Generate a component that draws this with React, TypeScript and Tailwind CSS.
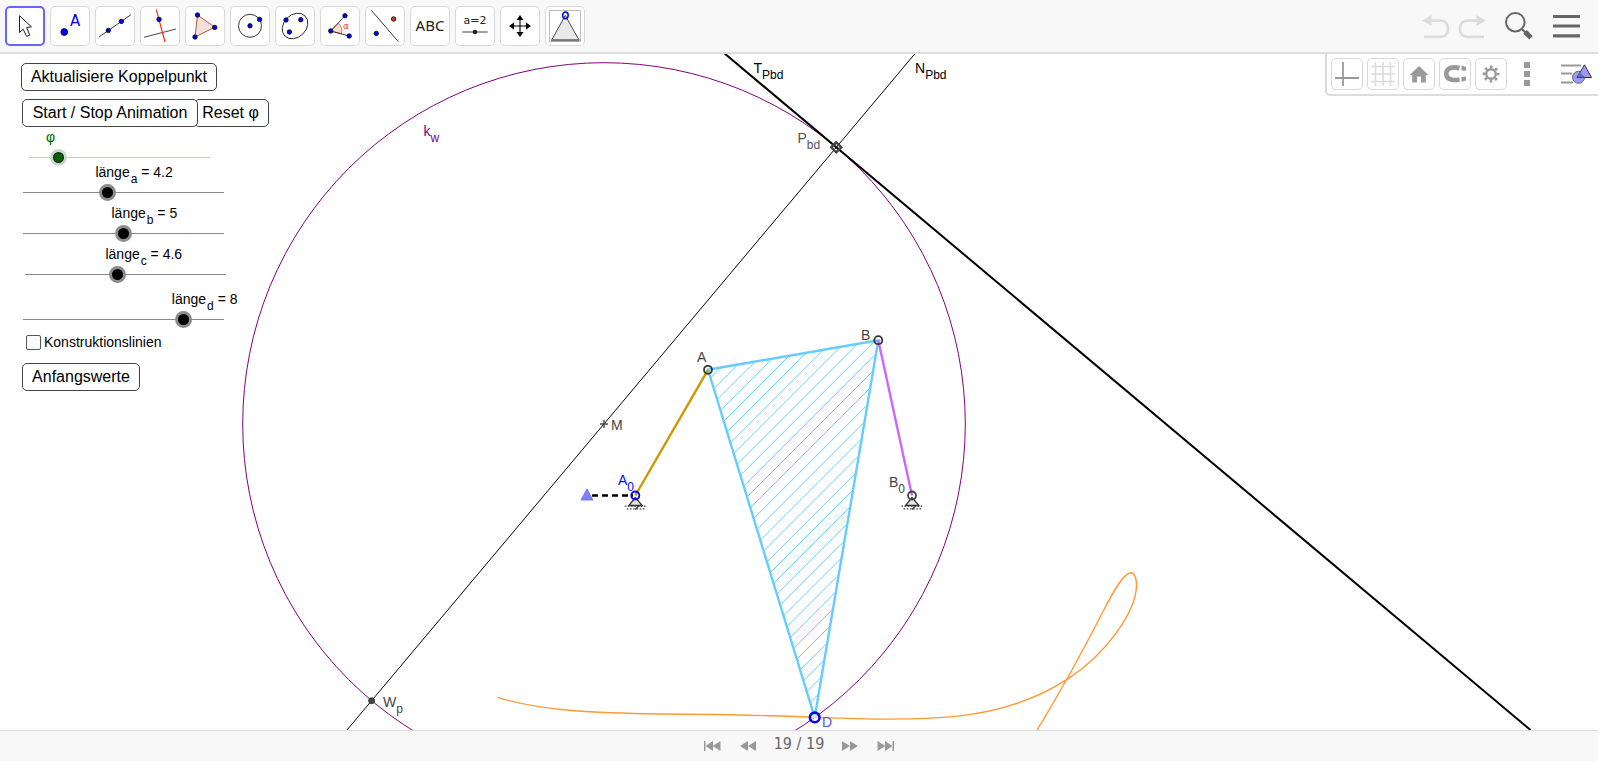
import { useState, type CSSProperties, type ReactNode } from "react";

const BLUE = "#0000ff";

const COUPLER_CURVE =
  "M497.5 697.4C545 712 600 713 661 714C720 714.3 770 715.5 814.6 717.3C860 719 910 721 960 715.9C1003 711 1040 697 1067.5 679.2C1105 655 1136.5 612 1136.5 585C1136.5 577 1134 572.7 1131 572.7C1124 572.7 1114 590 1103.3 611C1090 637 1070 676 1036 732";

/* ---------- toolbar ---------- */

function Dot({ x, y, fill = BLUE, r = 2.2 }: { x: number; y: number; fill?: string; r?: number }) {
  return <circle cx={x} cy={y} r={r} fill={fill} stroke="#000" strokeWidth="0.8" />;
}

const TOOLS: { name: string; icon: ReactNode }[] = [
  {
    name: "Bewege",
    icon: <path d="M14.5 9.7V26.5L18.2 23.2L21.6 30.4L24.8 29L21.6 21.6L26.4 20.8Z" fill="#fff" stroke="#222" strokeWidth="1" />,
  },
  {
    name: "Punkt",
    icon: (
      <>
        <Dot x={14.3} y={26} r={3.4} />
        <text x="20" y="19.7" fill={BLUE} className="font-['DejaVu_Sans',sans-serif] text-[15px]">A</text>
      </>
    ),
  },
  {
    name: "Gerade",
    icon: (
      <>
        <path d="M4 31L36 8.7" stroke="#222" strokeWidth="0.9" />
        <Dot x={13.3} y={24.4} />
        <Dot x={26.4} y={15.4} />
      </>
    ),
  },
  {
    name: "Senkrechte",
    icon: (
      <>
        <path d="M4 31.3L36 23" stroke="#333" strokeWidth="0.9" />
        <path d="M16.3 3.7L25 36" stroke="#f03020" strokeWidth="1.2" />
        <Dot x={19} y={13.4} />
      </>
    ),
  },
  {
    name: "Vieleck",
    icon: (
      <>
        <path d="M12.5 9L29.7 21.3L10 31Z" fill="#f3e0d6" stroke="#a84a2c" strokeWidth="0.9" />
        <Dot x={12.5} y={9} />
        <Dot x={29.7} y={21.4} />
        <Dot x={10} y={31} />
      </>
    ),
  },
  {
    name: "Kreis",
    icon: (
      <>
        <circle cx="20" cy="19.8" r="11.5" stroke="#222" strokeWidth="0.9" />
        <Dot x={20} y={19.8} />
        <Dot x={29.6} y={13.4} />
      </>
    ),
  },
  {
    name: "Ellipse",
    icon: (
      <>
        <ellipse cx="20" cy="20" rx="14.2" ry="11.2" transform="rotate(-45 20 20)" stroke="#222" strokeWidth="0.9" />
        <Dot x={11} y={14} />
        <Dot x={25.8} y={13.7} />
        <Dot x={14.4} y={26} />
      </>
    ),
  },
  {
    name: "Winkel",
    icon: (
      <>
        <path d="M10.7 25L18.4 17.2A11 11 0 0 1 21.4 27.8Z" fill="#fbdcd4" stroke="#e8502f" strokeWidth="0.8" />
        <path d="M25 9.7L10.7 25L29 30" stroke="#222" strokeWidth="0.9" />
        <Dot x={25} y={9.8} />
        <Dot x={10.7} y={25} />
        <Dot x={29.2} y={30} />
        <text x="23" y="23" fill="#f03020" className="font-['DejaVu_Sans',sans-serif] text-[9px]">α</text>
      </>
    ),
  },
  {
    name: "Spiegelung",
    icon: (
      <>
        <path d="M6.3 4.3L33.4 35.7" stroke="#222" strokeWidth="0.9" />
        <Dot x={28.6} y={13} fill="#f03030" />
        <Dot x={11.3} y={27.4} />
      </>
    ),
  },
  {
    name: "Text",
    icon: (
      <text x="20" y="25.3" textAnchor="middle" fill="#222" className="font-['Noto_Sans',sans-serif] text-[15px]">ABC</text>
    ),
  },
  {
    name: "Schieberegler",
    icon: (
      <>
        <text x="20" y="18.3" textAnchor="middle" fill="#222" className="font-['DejaVu_Sans',sans-serif] text-[11px]">a=2</text>
        <path d="M7.3 26H32.7" stroke="#777" strokeWidth="1.4" />
        <circle cx="20" cy="26" r="2.3" fill="#222" />
      </>
    ),
  },
  {
    name: "Verschiebe Zeichenblatt",
    icon: (
      <>
        <path d="M20 12V28M12 20H28" stroke="#000" strokeWidth="1.1" />
        <path d="M20 9L23.5 14H16.5ZM20 31L23.5 26H16.5ZM9 20L14 16.5V23.5ZM31 20L26 16.5V23.5Z" fill="#000" />
      </>
    ),
  },
  {
    name: "Lager",
    icon: (
      <>
        <path d="M4.5 4.5H35.5V35.5H4.5Z" fill="#fff" stroke="#bbb" />
        <path d="M20.3 9.5L34 34H6.7Z" fill="#e9e9e9" stroke="#333" strokeWidth="0.9" />
        <path d="M6 34.3H34.5" stroke="#777" strokeWidth="2" />
        <ellipse cx="20.4" cy="9.3" rx="2.8" ry="3.4" stroke={BLUE} strokeWidth="1.5" />
      </>
    ),
  },
];

function Toolbar() {
  const [active, setActive] = useState(0);
  return (
    <header className="flex shrink-0 items-center border-b-2 border-[#dddddd] bg-[#f8f8f8] py-[6px] pr-[18px] pl-[5px]">
      <div className="flex gap-[5px]">
        {TOOLS.map((tool, i) => (
          <button
            key={tool.name}
            type="button"
            aria-label={tool.name}
            aria-pressed={i === active}
            onClick={() => setActive(i)}
            className={
              i === active
                ? "size-10 rounded-[5px] bg-white inset-ring-2 inset-ring-[#6666ff]"
                : "size-10 rounded-[5px] bg-white inset-ring inset-ring-[#d8d8d8]"
            }
          >
            <svg width="40" height="40" viewBox="0 0 40 40" fill="none">
              {tool.icon}
            </svg>
          </button>
        ))}
      </div>
      <div className="ml-auto flex items-center">
        <button type="button" aria-label="Rückgängig">
          <svg width="28" height="28" viewBox="0 0 28 28" fill="none">
            <path d="M8 8.6H19C23.5 8.6 26 12 26 16.5S23.5 24.8 19 24.8H2" stroke="#dcdcdc" strokeWidth="2.7" />
            <path d="M0 8.6L9.5 3V14Z" fill="#dcdcdc" />
          </svg>
        </button>
        <button type="button" aria-label="Wiederherstellen" className="ml-2">
          <svg width="28" height="28" viewBox="0 0 28 28" fill="none">
            <path d="M20 8.6H9C4.5 8.6 2 12 2 16.5S4.5 24.8 9 24.8H26" stroke="#dcdcdc" strokeWidth="2.7" />
            <path d="M28 8.6L18.5 3V14Z" fill="#dcdcdc" />
          </svg>
        </button>
        <button type="button" aria-label="Suche" className="ml-[18px]">
          <svg width="30" height="30" viewBox="0 0 30 30" fill="none" stroke="#666">
            <circle cx="11.3" cy="11.2" r="9.3" strokeWidth="2" />
            <path d="M17.8 18L21.5 21.5" strokeWidth="2.2" />
            <path d="M21 20.8L27 26.8" strokeWidth="5" />
          </svg>
        </button>
        <button type="button" aria-label="Menü" className="ml-[19px]">
          <svg width="27" height="28" viewBox="0 0 27 28" fill="none" stroke="#666" strokeWidth="3.2">
            <path d="M0 4.5H27M0 14H27M0 23.8H27" />
          </svg>
        </button>
      </div>
    </header>
  );
}

/* ---------- style bar ---------- */

const STYLE_TOOLS: { name: string; icon: ReactNode }[] = [
  { name: "Achsen", icon: <path d="M4 20H28M12 4V28" stroke="#999" strokeWidth="1.8" /> },
  { name: "Gitter", icon: <path d="M4 8.5H28M4 16H28M4 23.5H28M8.5 4V28M16 4V28M23.5 4V28" stroke="#dcdcdc" strokeWidth="1.6" /> },
  { name: "Standardansicht", icon: <path d="M16 8L25.3 17H22.8V24.5H18V18.5H14V24.5H9.2V17H6.7Z" fill="#999" /> },
  {
    name: "Einfangen",
    icon: (
      <>
        <path d="M20.5 10C11 8 7.2 11.5 7.2 15.7S11 23.4 20.5 21.4" stroke="#999" strokeWidth="4.6" />
        <path d="M22.5 7.6V12.4L27 12.8V9ZM22.5 19V23.8L27 22.4V18.6Z" fill="#999" />
      </>
    ),
  },
  {
    name: "Einstellungen",
    icon: (
      <>
        <circle cx="16" cy="16" r="4.8" stroke="#999" strokeWidth="2.4" />
        <circle cx="16" cy="16" r="7" stroke="#999" strokeWidth="2.8" strokeDasharray="2.6 2.9" strokeDashoffset="1.3" />
      </>
    ),
  },
];

function StyleBar() {
  return (
    <div className="absolute top-0 right-0 flex items-center gap-1 rounded-bl-[5px] border-b-2 border-l-2 border-[#dddddd] bg-white py-[4px] pr-[5px] pl-[4px]">
      {STYLE_TOOLS.map((tool) => (
        <button
          key={tool.name}
          type="button"
          aria-label={tool.name}
          className="size-8 rounded-[5px] bg-white inset-ring inset-ring-[#d8d8d8]"
        >
          <svg width="32" height="32" viewBox="0 0 32 32" fill="none">
            {tool.icon}
          </svg>
        </button>
      ))}
      <button type="button" aria-label="Mehr" className="size-8">
        <svg width="32" height="32" viewBox="0 0 32 32" fill="#999">
          <path d="M13 4H19V10H13ZM13 13H19V19H13ZM13 22H19V28H13Z" />
        </svg>
      </button>
      <button type="button" aria-label="Algebra-Ansicht" className="ml-[14px] size-8">
        <svg width="32" height="32" viewBox="0 0 32 32" fill="none">
          <path d="M0 7.5H20M0 15.5H11M0 24.5H12" stroke="#999" strokeWidth="2" />
          <circle cx="17.5" cy="19.3" r="6" fill="#9999ff" stroke="#666" />
          <path d="M23.5 6.8L30.5 19.5H16Z" fill="#9999ff" stroke="#333" />
          <path d="M16.2 19.2L18.8 14.8L23 18L22.8 19.3Z" fill="#6a6ac8" />
        </svg>
      </button>
    </div>
  );
}

/* ---------- input panel ---------- */

function PanelButton({ children, className = "" }: { children: ReactNode; className?: string }) {
  return (
    <button
      type="button"
      className={`h-7 rounded-[5px] border border-[#444] bg-white text-[16px] leading-6 whitespace-nowrap text-black ${className}`}
    >
      {children}
    </button>
  );
}

type SliderProps = {
  id: string;
  max: number;
  initial: number;
  index?: string;
  green?: boolean;
  className: string;
};

function Slider({ id, max, initial, index, green = false, className }: SliderProps) {
  const [value, setValue] = useState(initial);
  const labelStyle: CSSProperties = { marginLeft: `calc(${(value / max) * 100}% - 12px)` };
  return (
    <div className={className}>
      <label
        htmlFor={id}
        style={labelStyle}
        className={
          green
            ? "block h-[18px] text-[14px] leading-[12px] whitespace-nowrap text-[#006400]"
            : "block h-[18px] text-[14px] leading-[12px] whitespace-nowrap text-black"
        }
      >
        {index ? (
          <>
            länge
            <sub className="bottom-[-6px] ml-px align-baseline text-[12px] leading-none">{index}</sub> = {value}
          </>
        ) : (
          "φ"
        )}
      </label>
      <div className="grid items-center">
        <div className={green ? "col-start-1 row-start-1 h-px bg-[#c4ccc4]" : "col-start-1 row-start-1 h-px bg-[#888]"} />
        <input
          id={id}
          type="range"
          min={0}
          max={max}
          step={max / 100}
          value={value}
          onChange={(e) => setValue(Number(e.target.value))}
          className={
            green
              ? "relative col-start-1 row-start-1 -mx-2 h-[17px] appearance-none bg-transparent [&::-webkit-slider-thumb]:size-[17px] [&::-webkit-slider-thumb]:appearance-none [&::-webkit-slider-thumb]:rounded-full [&::-webkit-slider-thumb]:border-3 [&::-webkit-slider-thumb]:border-[#ccd6cc] [&::-webkit-slider-thumb]:bg-[#006400] [&::-webkit-slider-thumb]:shadow-[inset_0_0_0_1px_#111]"
              : "relative col-start-1 row-start-1 -mx-2 h-[17px] appearance-none bg-transparent [&::-webkit-slider-thumb]:size-[17px] [&::-webkit-slider-thumb]:appearance-none [&::-webkit-slider-thumb]:rounded-full [&::-webkit-slider-thumb]:border-3 [&::-webkit-slider-thumb]:border-[#8c8c8c] [&::-webkit-slider-thumb]:bg-black"
          }
        />
      </div>
    </div>
  );
}

function InputPanel() {
  return (
    <form className="relative flex w-max flex-col items-start pt-[9px] pl-[21px]">
      <PanelButton className="w-[196px]">Aktualisiere Koppelpunkt</PanelButton>
      <div className="mt-2 ml-px flex">
        <PanelButton className="relative z-10 w-[176px]">Start / Stop Animation</PanelButton>
        <PanelButton className="-ml-1 w-[75px] pr-[2px]">Reset φ</PanelButton>
      </div>
      <Slider id="phi" max={100} initial={16} green className="mt-1 ml-2 w-[181px]" />
      <Slider id="laenge-a" index="a" max={10} initial={4.2} className="ml-[2px] w-[201px]" />
      <Slider id="laenge-b" index="b" max={10} initial={5} className="mt-[6px] ml-[2px] w-[201px]" />
      <Slider id="laenge-c" index="c" max={10} initial={4.6} className="mt-[6px] ml-1 w-[201px]" />
      <Slider id="laenge-d" index="d" max={10} initial={8} className="mt-[10px] ml-[2px] w-[201px]" />
      <label className="mt-[6px] ml-[5px] flex items-center gap-[3px] text-[14px] leading-4 text-black">
        <input
          type="checkbox"
          className="size-[15px] appearance-none rounded-[2px] border border-[#555] bg-white checked:bg-[#555]"
        />
        Konstruktionslinien
      </label>
      <PanelButton className="mt-[13px] ml-px w-[118px]">Anfangswerte</PanelButton>
    </form>
  );
}

/* ---------- drawing ---------- */

type LabelProps = { x: number; y: number; text: string; sub?: string; fill?: string };

function Label({ x, y, text, sub, fill = "#444" }: LabelProps) {
  return (
    <text x={x} y={y} fill={fill} className="font-['Liberation_Sans',Arial,sans-serif] text-[14px]">
      {text}
      {sub && (
        <tspan dy="6" className="text-[12px]">
          {sub}
        </tspan>
      )}
    </text>
  );
}

function Support({ x, y }: { x: number; y: number }) {
  return (
    <g stroke="#333">
      <path d={`M${x} ${y + 2}L${x - 6.5} ${y + 10}H${x + 7}Z`} fill="#e4e4e4" strokeWidth="1.3" />
      <path d={`M${x - 10.5} ${y + 10.7}H${x + 11.5}`} strokeDasharray="1.5 1.7" strokeWidth="1.2" />
      <path d={`M${x - 8.5} ${y + 13.3}H${x + 9}`} strokeDasharray="1.5 1.7" strokeWidth="1.2" />
      <path d={`M${x + 4} ${y + 10}L${x} ${y + 14}`} strokeWidth="1.2" />
    </g>
  );
}

function Geometry() {
  const hatch = Array.from({ length: 34 }, (_, k) => 1088.4 + k * 14.14);
  return (
    <svg className="absolute inset-0 h-full w-full" fill="none" role="img" aria-label="Viergelenkgetriebe">
      <defs>
        <clipPath id="coupler">
          <path d="M708 369.8L878.3 340.2L814.7 717.4Z" />
        </clipPath>
      </defs>
      <g transform="translate(0 -54)">
        <circle cx="604" cy="424" r="361.3" stroke="#800080" strokeWidth="1" />
        <path d="M915.5 53L347 730" stroke="#000" strokeWidth="1" />
        <path d="M724 53L1530.5 730" stroke="#000" strokeWidth="2" />

        <g clipPath="url(#coupler)" stroke="#66ccff" strokeWidth="1">
          {hatch.map((c) => (
            <path key={c} d={`M${c - 730} 730L${c - 330} 330`} />
          ))}
        </g>
        <path d="M708 369.8L878.3 340.2L814.7 717.4Z" stroke="#66ccff" strokeWidth="2.4" />

        <path d={COUPLER_CURVE} stroke="#ff9933" strokeWidth="1.4" />

        <path d="M592 495.5H633" stroke="#000" strokeWidth="2.4" strokeDasharray="6 4" />
        <path d="M587 489L593 500H581Z" fill="#8080ff" stroke="#6666ee" strokeWidth="0.8" />
        <Support x={635.3} y={495.5} />
        <Support x={912} y={495.5} />

        <path d="M635.3 495.5L708 369.8" stroke="#cc9900" strokeWidth="2.4" />
        <path d="M912 495.5L878.3 340.2" stroke="#cc66ff" strokeWidth="2.4" />

        <circle cx="708" cy="369.8" r="4" stroke="#333" strokeWidth="1.8" />
        <circle cx="878.3" cy="340.2" r="4" stroke="#333" strokeWidth="1.8" />
        <circle cx="912" cy="495.5" r="4" stroke="#444" strokeWidth="1.8" />
        <circle cx="635.3" cy="495.5" r="4" stroke={BLUE} strokeWidth="1.8" />
        <circle cx="814.7" cy="717.4" r="4.8" fill="#fff" fillOpacity="0.6" stroke={BLUE} strokeWidth="2.6" />
        <circle cx="371.6" cy="700.7" r="3" fill="#444" stroke="#222" strokeWidth="0.8" />
        <path d="M600 424H608M604 420V428" stroke="#444" strokeWidth="1.4" />
        <path d="M836.3 142.3L841.3 147.3L836.3 152.3L831.3 147.3Z" stroke="#444" strokeWidth="2.4" />

        <Label x={753.5} y={73} text="T" sub="Pbd" fill="#000" />
        <Label x={915} y={73} text="N" sub="Pbd" fill="#000" />
        <Label x={797.5} y={143} text="P" sub="bd" fill="#555" />
        <Label x={423.5} y={136} text="k" sub="w" fill="#800080" />
        <Label x={697} y={362} text="A" />
        <Label x={861} y={340} text="B" />
        <Label x={611} y={430} text="M" />
        <Label x={618} y={485} text="A" sub="0" fill={BLUE} />
        <Label x={889} y={487} text="B" sub="0" />
        <Label x={383} y={707} text="W" sub="p" />
        <Label x={822} y={727} text="D" fill="#5555ff" />
      </g>
    </svg>
  );
}

/* ---------- navigation bar ---------- */

function NavButton({ name, d, className = "" }: { name: string; d: string; className?: string }) {
  return (
    <button type="button" aria-label={name} className={className}>
      <svg width="18" height="12" viewBox="0 0 18 12" fill="#999">
        <path d={d} />
      </svg>
    </button>
  );
}

function NavigationBar() {
  return (
    <footer className="flex h-[31px] shrink-0 items-center justify-center border-t border-[#dddddd] bg-[#f8f8f8]">
      <NavButton name="Zum Anfang" d="M1 1H2.5V11H1ZM2.5 6L10 1V11ZM9.5 6L17.5 1V11Z" />
      <NavButton name="Zurück" className="ml-[19px]" d="M0 6L8 1V11ZM8 6L16 1V11Z" />
      <span className="mx-4 pb-1 font-['DejaVu_Sans_Condensed','DejaVu_Sans',sans-serif] text-[16px] leading-5 text-[#666]">
        19 / 19
      </span>
      <NavButton name="Weiter" className="mr-[19px]" d="M2 1L10 6L2 11ZM10 1L18 6L10 11Z" />
      <NavButton name="Zum Ende" d="M0.5 1L8.5 6L0.5 11ZM8 1L15.5 6L8 11ZM15.5 1H17V11H15.5Z" />
    </footer>
  );
}

export default function App() {
  return (
    <div className="h-screen bg-white pr-[2px] pb-[2px] font-['Liberation_Sans',Arial,sans-serif]">
      <div className="flex h-full flex-col">
        <Toolbar />
        <main className="relative min-h-0 flex-1 overflow-hidden bg-white">
          <Geometry />
          <InputPanel />
          <StyleBar />
        </main>
        <NavigationBar />
      </div>
    </div>
  );
}
